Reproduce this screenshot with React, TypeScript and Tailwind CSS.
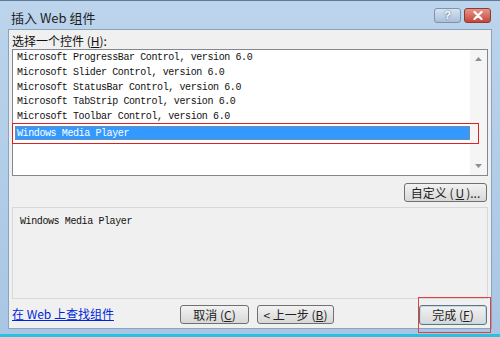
import React from "react";

const items = [
  "Microsoft ProgressBar Control, version 6.0",
  "Microsoft Slider Control, version 6.0",
  "Microsoft StatusBar Control, version 6.0",
  "Microsoft TabStrip Control, version 6.0",
  "Microsoft Toolbar Control, version 6.0",
  "Windows Media Player",
];

const cjk = "font-['Noto_Sans_CJK_SC','Noto_Sans',sans-serif]";
const mono = "font-['Liberation_Mono',monospace] text-[10px] tracking-[-0.4px]";

const Btn = ({ children, className = "" }: { children: React.ReactNode; className?: string }) => (
  <div
    className={`flex items-center justify-center rounded-[3px] border border-[#707070] bg-gradient-to-b from-[#f2f2f2] to-[#d8d8d8] text-[12px] text-[#222] ${cjk} ${className}`}
  >
    {children}
  </div>
);

export default function App() {
  return (
    <div className="flex h-[337px] w-[500px] flex-col overflow-hidden bg-gradient-to-b from-[#bcd4ec] to-[#a8c6e4]">
      {/* title bar */}
      <div className="flex h-[29px] shrink-0 items-center border-t border-[#5d7b99] pl-[11px] pr-[9px]">
        <span className={`pt-[5px] text-[13px] text-[#1e1e1e] ${cjk}`}>插入 Web 组件</span>
        <div className="ml-auto mt-[1px] flex gap-[3px]">
          <div className="flex h-[15px] w-[27px] items-center justify-center rounded-[3px] border border-[#7d93ad] bg-gradient-to-b from-[#d6e3f0] to-[#aac0d8] text-[11px] font-bold text-white [text-shadow:0_0_2px_#34506e] font-['Liberation_Sans',sans-serif]">
            ?
          </div>
          <div className="flex h-[15px] w-[27px] items-center justify-center rounded-[3px] border border-[#8e3a33] bg-gradient-to-b from-[#e4968a] to-[#c4453a]">
            <svg width="10" height="9" viewBox="0 0 10 9">
              <path d="M1.5 1 L8.5 8 M8.5 1 L1.5 8" stroke="#fff" strokeWidth="2.2" strokeLinecap="round" />
            </svg>
          </div>
        </div>
      </div>

      {/* body */}
      <div className="mx-[8px] flex flex-1 flex-col border border-[#8aa4c0] bg-[#f0f0f0] px-[3px]">
        <div className={`mt-[3px] h-[16px] text-[12px] leading-[16px] text-[#111] ${cjk}`}>
          选择一个控件 (<span className="underline">H</span>):
        </div>

        {/* list */}
        <div className="flex h-[127px] border border-[#828790] bg-white">
          <div className={`flex-1 pt-[1px] pl-[2px] text-[#111] ${mono}`}>
            {items.map((t, i) =>
              i === items.length - 1 ? (
                <div key={t} className="relative mt-[1px]">
                  <div className="h-[14px] border border-[#6f8fb0] bg-[#3399ff] pl-[1px] leading-[13px] text-white">{t}</div>
                  <div className="absolute -left-[3px] -right-[9px] -top-[3px] h-[21px] border border-[#e02020]" />
                </div>
              ) : (
                <div key={t} className="h-[14.8px] pl-[2px] leading-[14.8px]">
                  {t}
                </div>
              )
            )}
          </div>
          <div className="flex w-[17px] flex-col items-center justify-between bg-[#f5f5f5] py-[7px]">
            <svg width="7" height="4" viewBox="0 0 7 4">
              <path d="M0 4 L3.5 0 L7 4 Z" fill="#909090" />
            </svg>
            <svg width="7" height="4" viewBox="0 0 7 4">
              <path d="M0 0 L3.5 4 L7 0 Z" fill="#909090" />
            </svg>
          </div>
        </div>

        <div className="mt-[7px] flex justify-end pr-[1px]">
          <Btn className="h-[19px] w-[83px] gap-[2px]">
            自定义 (<span className="underline">U</span>)...
          </Btn>
        </div>

        {/* description */}
        <div className={`mt-[5px] h-[92px] border border-[#d8d8d8] bg-[#f0f0f0] pl-[7px] pt-[6px] text-[#111] ${mono}`}>
          Windows Media Player
        </div>

        {/* footer */}
        <div className="mt-[6px] flex items-start">
          <a className={`text-[12px] text-[#0026d9] underline ${cjk}`}>在 Web 上查找组件</a>
          <Btn className="ml-[66px] h-[19px] w-[69px]">
            取消 (<span className="underline">C</span>)
          </Btn>
          <Btn className="ml-[8px] h-[19px] w-[77px]">
            &lt; 上一步 (<span className="underline">B</span>)
          </Btn>
          <div className="relative ml-auto mr-[1px]">
            <Btn className="h-[20px] w-[68px] border-[#3c7fb1] shadow-[inset_0_0_0_1px_#b0e0f8]">
              完成 (<span className="underline">F</span>)
            </Btn>
            <div className="absolute -left-[1px] -right-[4px] -top-[8px] h-[36px] border border-[#e04040]" />
          </div>
        </div>
      </div>

      <div className="h-[5px] shrink-0" />
      <div className="h-[3px] shrink-0 bg-[#22c4e0]" />
    </div>
  );
}
